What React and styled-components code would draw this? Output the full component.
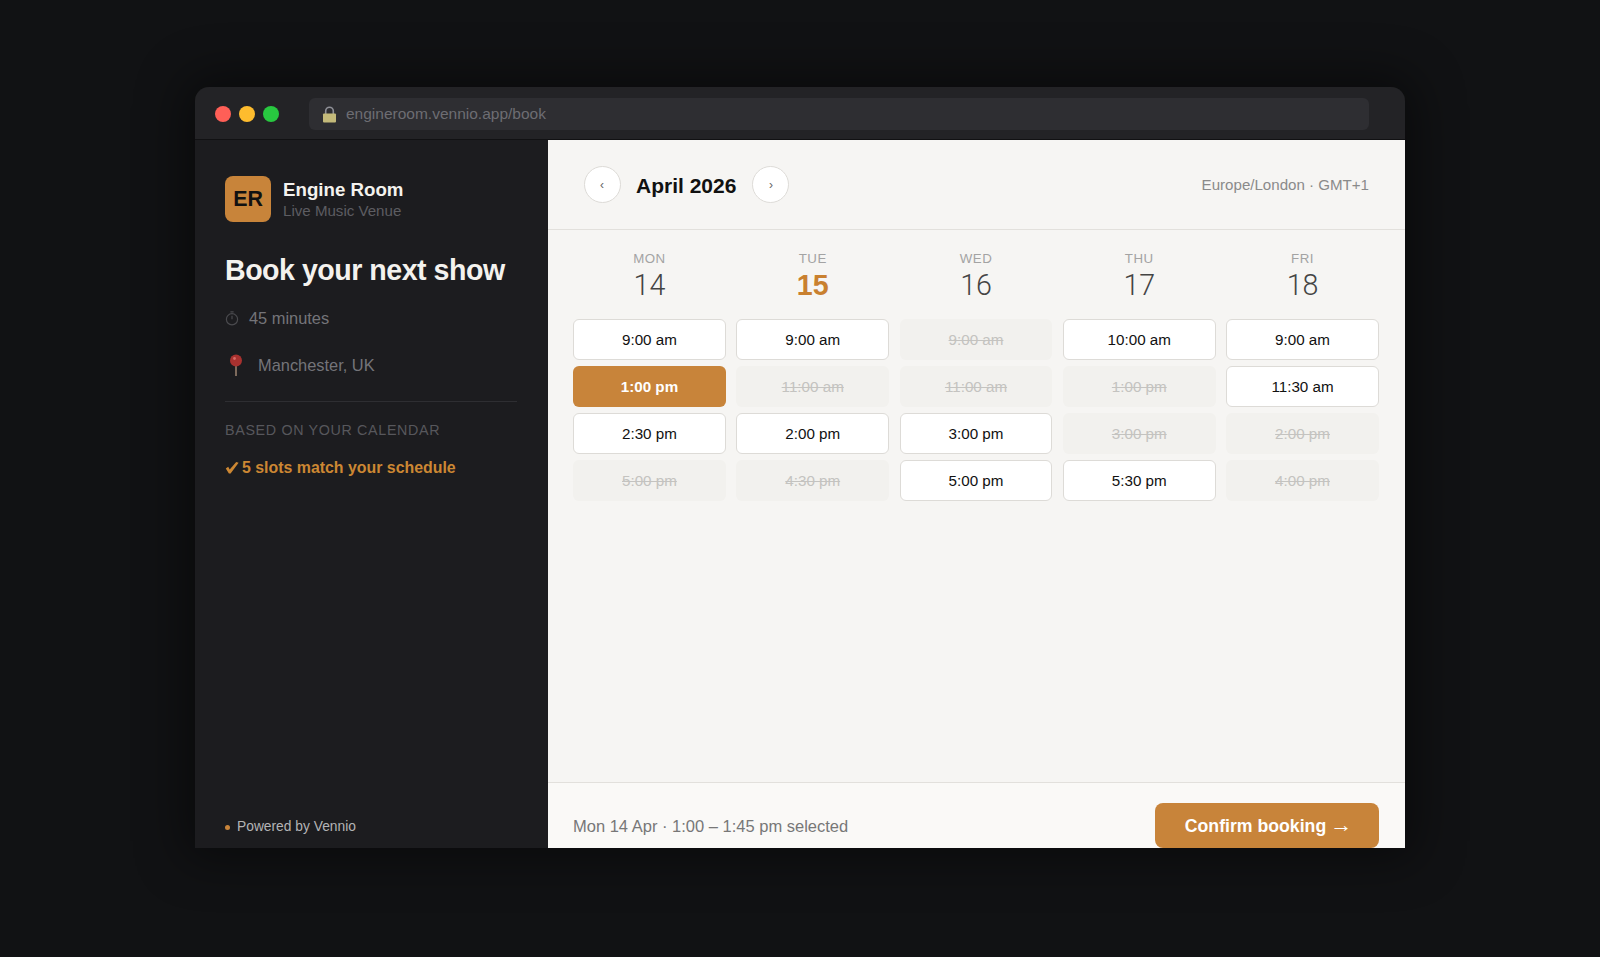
import styled, { createGlobalStyle } from "styled-components";

const GlobalStyle = createGlobalStyle`
  html, body {
    margin: 0;
    padding: 0;
    height: 100%;
    background: #111214;
    font-family: "Liberation Sans", Arial, sans-serif;
  }
`;

const Stage = styled.div`
  height: 957px;
  box-sizing: border-box;
  padding: 87px 195px 109px;
  overflow: hidden;
  background: #111214;
`;

const Browser = styled.div`
  display: flex;
  flex-direction: column;
  height: 761px;
  border-radius: 14px 14px 0 0;
  overflow: hidden;
  box-shadow: 0 0 50px 10px rgba(0, 0, 0, 0.45);
`;

const ChromeBar = styled.div`
  display: flex;
  align-items: center;
  flex: 0 0 53px;
  box-sizing: border-box;
  padding: 2px 36px 0 20px;
  background: #232326;
  border-bottom: 1px solid #111113;
`;

const Light = styled.span`
  width: 16px;
  height: 16px;
  margin-right: 8px;
  border-radius: 50%;
  background: ${(p) => p.$color};
`;

const AddressBar = styled.div`
  display: flex;
  align-items: center;
  flex: 1;
  height: 32px;
  margin-left: 22px;
  padding-left: 13px;
  gap: 9px;
  border-radius: 6px;
  background: #2e2e32;
  color: #6d6d72;
  font-size: 15.5px;
`;

const Body = styled.div`
  display: flex;
  flex: 1;
  min-height: 0;
`;

const Sidebar = styled.aside`
  display: flex;
  flex-direction: column;
  flex: 0 0 352.5px;
  box-sizing: border-box;
  padding: 36px 31px 0 30px;
  background: #1c1c1f;
`;

const Brand = styled.div`
  display: flex;
  align-items: center;
  gap: 12px;
`;

const BrandMark = styled.div`
  display: flex;
  align-items: center;
  justify-content: center;
  width: 46px;
  height: 46px;
  border-radius: 8px;
  background: #c8843a;
  color: #111;
  font-size: 21.4px;
  font-weight: 700;
`;

const BrandName = styled.div`
  color: #f4f2ee;
  font-size: 18.7px;
  font-weight: 700;
  line-height: 22px;
`;

const BrandSub = styled.div`
  margin-top: 1px;
  color: #5d5d62;
  font-size: 15.1px;
  line-height: 18px;
`;

const Title = styled.h1`
  margin: 31px 0 0;
  color: #f4f2ee;
  font-size: 28.6px;
  font-weight: 700;
  letter-spacing: -0.5px;
  line-height: 34px;
`;

const Meta = styled.div`
  display: flex;
  align-items: center;
  height: 24px;
  margin-top: ${(p) => p.$top}px;
  gap: ${(p) => p.$gap}px;
  color: #747479;
  font-size: 16.4px;
`;

const Divider = styled.div`
  height: 1px;
  margin-top: 24px;
  background: #2e2e32;
`;

const SectionLabel = styled.div`
  margin-top: 19px;
  color: #57575c;
  font-size: 14.3px;
  letter-spacing: 0.66px;
  line-height: 18px;
`;

const MatchNote = styled.div`
  display: flex;
  align-items: center;
  margin-top: 19px;
  gap: 3px;
  color: #cc8733;
  font-size: 15.9px;
  font-weight: 700;
  line-height: 20px;
`;

const PoweredBy = styled.div`
  display: flex;
  align-items: center;
  margin-top: auto;
  margin-bottom: 12px;
  gap: 7px;
  color: #b4b4b6;
  font-size: 13.8px;
  line-height: 18px;
`;

const Dot = styled.span`
  width: 5px;
  height: 5px;
  border-radius: 50%;
  background: #c8843a;
`;

const Main = styled.main`
  display: flex;
  flex-direction: column;
  flex: 1;
  min-width: 0;
  background: #f6f5f3;
`;

const CalendarHeader = styled.div`
  display: flex;
  align-items: center;
  flex: 0 0 90px;
  box-sizing: border-box;
  padding: 0 36px;
  border-bottom: 1px solid #e2e0dc;
`;

const NavButton = styled.button`
  display: flex;
  align-items: center;
  justify-content: center;
  width: 37px;
  height: 37px;
  padding: 0;
  border: 1px solid #dddbd7;
  border-radius: 50%;
  background: #fff;
  color: #666;
  font-family: inherit;
  font-size: 12px;
`;

const Month = styled.div`
  margin: 3px 16px 0 15.5px;
  color: #111;
  font-size: 21px;
  font-weight: 700;
`;

const Timezone = styled.div`
  margin-left: auto;
  color: #8a8a8a;
  font-size: 15.1px;
`;

const Week = styled.div`
  display: grid;
  grid-template-columns: repeat(5, 1fr);
  column-gap: 10.4px;
  flex: 1;
  align-content: start;
  padding: 19px 26px 0 25.5px;
`;

const Column = styled.div`
  display: flex;
  flex-direction: column;
  gap: 6px;
`;

const DayHead = styled.div`
  display: flex;
  flex-direction: column;
  align-items: center;
  margin-bottom: 11px;
`;

const DayName = styled.div`
  color: #a3a3a3;
  font-size: 13.3px;
  letter-spacing: 0.5px;
  line-height: 19px;
`;

const DayNumber = styled.div`
  color: ${(p) => (p.$today ? "#c9802f" : "#444")};
  font-family: ${(p) => (p.$today ? '"Liberation Sans"' : "Roboto")}, sans-serif;
  font-size: 28.6px;
  font-weight: ${(p) => (p.$today ? 700 : 300)};
  line-height: 34px;
`;

const Slot = styled.div`
  display: flex;
  align-items: center;
  justify-content: center;
  height: 41px;
  box-sizing: border-box;
  border-radius: 6px;
  font-size: 15.2px;
  border: 1px solid ${(p) => (p.$state === "free" ? "#dddbd7" : "transparent")};
  background: ${(p) =>
    p.$state === "free" ? "#fff" : p.$state === "selected" ? "#c8843a" : "#f2f1ee"};
  color: ${(p) =>
    p.$state === "free" ? "#111" : p.$state === "selected" ? "#fff" : "#c4c3c0"};
  font-weight: ${(p) => (p.$state === "selected" ? 700 : 400)};
  text-decoration: ${(p) => (p.$state === "taken" ? "line-through" : "none")};
`;

const Footer = styled.div`
  display: flex;
  justify-content: space-between;
  flex: 0 0 65px;
  box-sizing: border-box;
  padding: 20px 26px 0 25.5px;
  border-top: 1px solid #e2e0dc;
  background: #faf9f7;
`;

const Selection = styled.div`
  margin-top: 13px;
  color: #777;
  font-size: 16.5px;
  line-height: 20px;
`;

const ConfirmButton = styled.button`
  display: flex;
  align-items: center;
  justify-content: center;
  gap: 4px;
  width: 224px;
  height: 45px;
  flex: none;
  padding: 2px 0 0 3px;
  border: 0;
  border-radius: 8px;
  background: #c8843a;
  color: #fff;
  font-family: inherit;
  font-size: 17.7px;
  font-weight: 700;
`;

const Arrow = styled.span`
  margin-bottom: 3px;
  font-size: 22px;
  font-weight: 400;
  line-height: 0;
`;

const days = [
  {
    name: "MON",
    date: 14,
    slots: [
      ["9:00 am", "free"],
      ["1:00 pm", "selected"],
      ["2:30 pm", "free"],
      ["5:00 pm", "taken"],
    ],
  },
  {
    name: "TUE",
    date: 15,
    today: true,
    slots: [
      ["9:00 am", "free"],
      ["11:00 am", "taken"],
      ["2:00 pm", "free"],
      ["4:30 pm", "taken"],
    ],
  },
  {
    name: "WED",
    date: 16,
    slots: [
      ["9:00 am", "taken"],
      ["11:00 am", "taken"],
      ["3:00 pm", "free"],
      ["5:00 pm", "free"],
    ],
  },
  {
    name: "THU",
    date: 17,
    slots: [
      ["10:00 am", "free"],
      ["1:00 pm", "taken"],
      ["3:00 pm", "taken"],
      ["5:30 pm", "free"],
    ],
  },
  {
    name: "FRI",
    date: 18,
    slots: [
      ["9:00 am", "free"],
      ["11:30 am", "free"],
      ["2:00 pm", "taken"],
      ["4:00 pm", "taken"],
    ],
  },
];

function LockIcon() {
  return (
    <svg width="15" height="17" viewBox="0 0 15 17">
      <path d="M3.7 8V5a3.8 3.8 0 0 1 7.6 0v3" fill="none" stroke="#8f9097" strokeWidth="1.6" />
      <rect x="1" y="7.5" width="13" height="9" rx="1" fill="#c4ba7a" />
    </svg>
  );
}

function ClockIcon() {
  return (
    <svg width="14" height="15" viewBox="0 0 14 15" fill="none" stroke="#4a4a4e" strokeWidth="1.2">
      <circle cx="7" cy="8.3" r="5.6" />
      <path d="M7 8.3V4.8M5.4.8h3.2" />
    </svg>
  );
}

function PinIcon() {
  return (
    <svg width="14" height="22" viewBox="0 0 14 22" style={{ marginLeft: 4 }}>
      <rect x="6" y="9" width="2" height="13" fill="#7d6a5c" />
      <circle cx="7" cy="6.5" r="6" fill="#a8312f" />
      <circle cx="5.5" cy="4.5" r="1.4" fill="#d86a66" />
    </svg>
  );
}

function CheckIcon() {
  return (
    <svg width="14" height="13" viewBox="0 0 14 13">
      <path d="M.8 6.4l2.4-1.6 1.5 2.6L11.2 0 13.6.8 5.6 11.4H3.9z" fill="#cc8733" />
    </svg>
  );
}

export default function App() {
  return (
    <>
      <GlobalStyle />
      <Stage>
        <Browser>
          <ChromeBar>
            <Light $color="#ff5f57" />
            <Light $color="#febc2e" />
            <Light $color="#28c840" />
            <AddressBar>
              <LockIcon />
              engineroom.vennio.app/book
            </AddressBar>
          </ChromeBar>
          <Body>
            <Sidebar>
              <Brand>
                <BrandMark>ER</BrandMark>
                <div>
                  <BrandName>Engine Room</BrandName>
                  <BrandSub>Live Music Venue</BrandSub>
                </div>
              </Brand>
              <Title>Book your next show</Title>
              <Meta $top={19} $gap={10}>
                <ClockIcon />
                45 minutes
              </Meta>
              <Meta $top={23} $gap={15}>
                <PinIcon />
                Manchester, UK
              </Meta>
              <Divider />
              <SectionLabel>BASED ON YOUR CALENDAR</SectionLabel>
              <MatchNote>
                <CheckIcon />5 slots match your schedule
              </MatchNote>
              <PoweredBy>
                <Dot />
                Powered by Vennio
              </PoweredBy>
            </Sidebar>
            <Main>
              <CalendarHeader>
                <NavButton>‹</NavButton>
                <Month>April 2026</Month>
                <NavButton>›</NavButton>
                <Timezone>Europe/London · GMT+1</Timezone>
              </CalendarHeader>
              <Week>
                {days.map((day) => (
                  <Column key={day.name}>
                    <DayHead>
                      <DayName>{day.name}</DayName>
                      <DayNumber $today={day.today}>{day.date}</DayNumber>
                    </DayHead>
                    {day.slots.map(([label, state], i) => (
                      <Slot key={i} $state={state}>
                        {label}
                      </Slot>
                    ))}
                  </Column>
                ))}
              </Week>
              <Footer>
                <Selection>Mon 14 Apr · 1:00 – 1:45 pm selected</Selection>
                <ConfirmButton>
                  Confirm booking <Arrow>→</Arrow>
                </ConfirmButton>
              </Footer>
            </Main>
          </Body>
        </Browser>
      </Stage>
    </>
  );
}
